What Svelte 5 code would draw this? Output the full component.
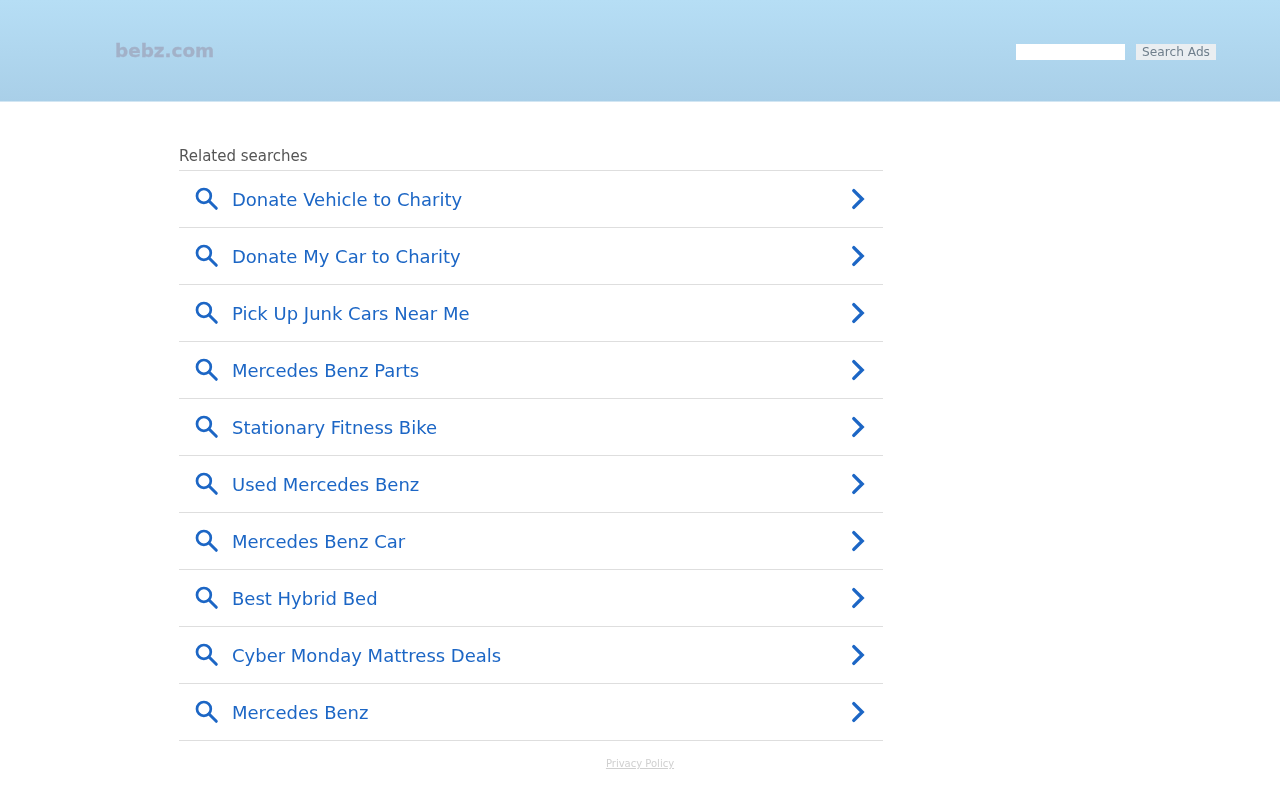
<script>
    const searches = [
        'Donate Vehicle to Charity',
        'Donate My Car to Charity',
        'Pick Up Junk Cars Near Me',
        'Mercedes Benz Parts',
        'Stationary Fitness Bike',
        'Used Mercedes Benz',
        'Mercedes Benz Car',
        'Best Hybrid Bed',
        'Cyber Monday Mattress Deals',
        'Mercedes Benz'
    ]
</script>

<header class="top">
    <div class="logo">bebz.com</div>
    <form class="search" onsubmit={(e) => e.preventDefault()}>
        <input type="text" aria-label="Search" />
        <button type="submit">Search Ads</button>
    </form>
</header>

<main class="content">
    <div class="title">Related searches</div>
    <ul class="list">
        {#each searches as term}
            <li>
                <a href="#top">
                    <svg class="glass" width="24" height="24" viewBox="0 0 24 24" fill="none" stroke="#1c66c5" stroke-width="2.7">
                        <circle cx="8.9" cy="8.9" r="6.9" />
                        <path d="M14 14 L21.3 21.3" stroke-width="3" stroke-linecap="round" />
                    </svg>
                    <span class="term">{term}</span>
                    <svg class="chev" width="16" height="22" viewBox="0 0 16 22" fill="none" stroke="#1c66c5" stroke-width="3.4">
                        <path d="M2.8 2.6 L11.2 11 L2.8 19.4" stroke-linecap="round" stroke-linejoin="miter" />
                    </svg>
                </a>
            </li>
        {/each}
    </ul>
</main>

<footer class="foot">
    <a href="#top">Privacy Policy</a>
</footer>

<style>
    :global(body) {
        background: #fff;
        font-family: "DejaVu Sans", sans-serif;
    }

    .top {
        display: flex;
        justify-content: space-between;
        align-items: center;
        height: 102px;
        box-sizing: border-box;
        padding: 0 64px 0 115px;
        background: linear-gradient(to bottom, #b6def5, #a9cfe8);
        border-bottom: 1px solid #d2e6f3;
    }

    .logo {
        font-family: "DejaVu Sans", sans-serif;
        font-weight: bold;
        font-size: 18.4px;
        color: #a2b1c8;
        -webkit-text-stroke: 0.3px #a2b1c8;
        filter: blur(0.6px);
    }

    .search {
        display: flex;
        align-items: center;
        gap: 11px;
        margin-top: 3px;
    }

    .search input {
        width: 109px;
        height: 16px;
        box-sizing: border-box;
        border: 0;
        padding: 0;
        background: #fff;
    }

    .search button {
        width: 80px;
        height: 16px;
        box-sizing: border-box;
        border: 0;
        padding: 0;
        background: #eaeef1;
        color: #6f7f8c;
        font-family: "DejaVu Sans", sans-serif;
        font-size: 12.2px;
        line-height: 16px;
        will-change: transform;
    }

    .content {
        width: 704px;
        margin: 0 0 0 179px;
        padding-top: 44px;
        will-change: transform;
    }

    .title {
        font-size: 15px;
        line-height: 20px;
        height: 24px;
        color: #555;
        border-bottom: 1px solid #dedede;
    }

    .list {
        list-style: none;
        margin: 0;
        padding: 0;
    }

    .list li {
        height: 57px;
        box-sizing: border-box;
        border-bottom: 1px solid #dedede;
    }

    .list a {
        display: flex;
        align-items: center;
        height: 56px;
        padding: 0 16px 0 16px;
        text-decoration: none;
        color: #1c66c5;
    }

    .term {
        flex: 1;
        margin-left: 13px;
        font-size: 18px;
    }

    .foot {
        text-align: center;
        margin-top: 16px;
        font-size: 10px;
        line-height: 14px;
        will-change: transform;
    }

    .foot a {
        color: #d0d0d0;
    }
</style>
